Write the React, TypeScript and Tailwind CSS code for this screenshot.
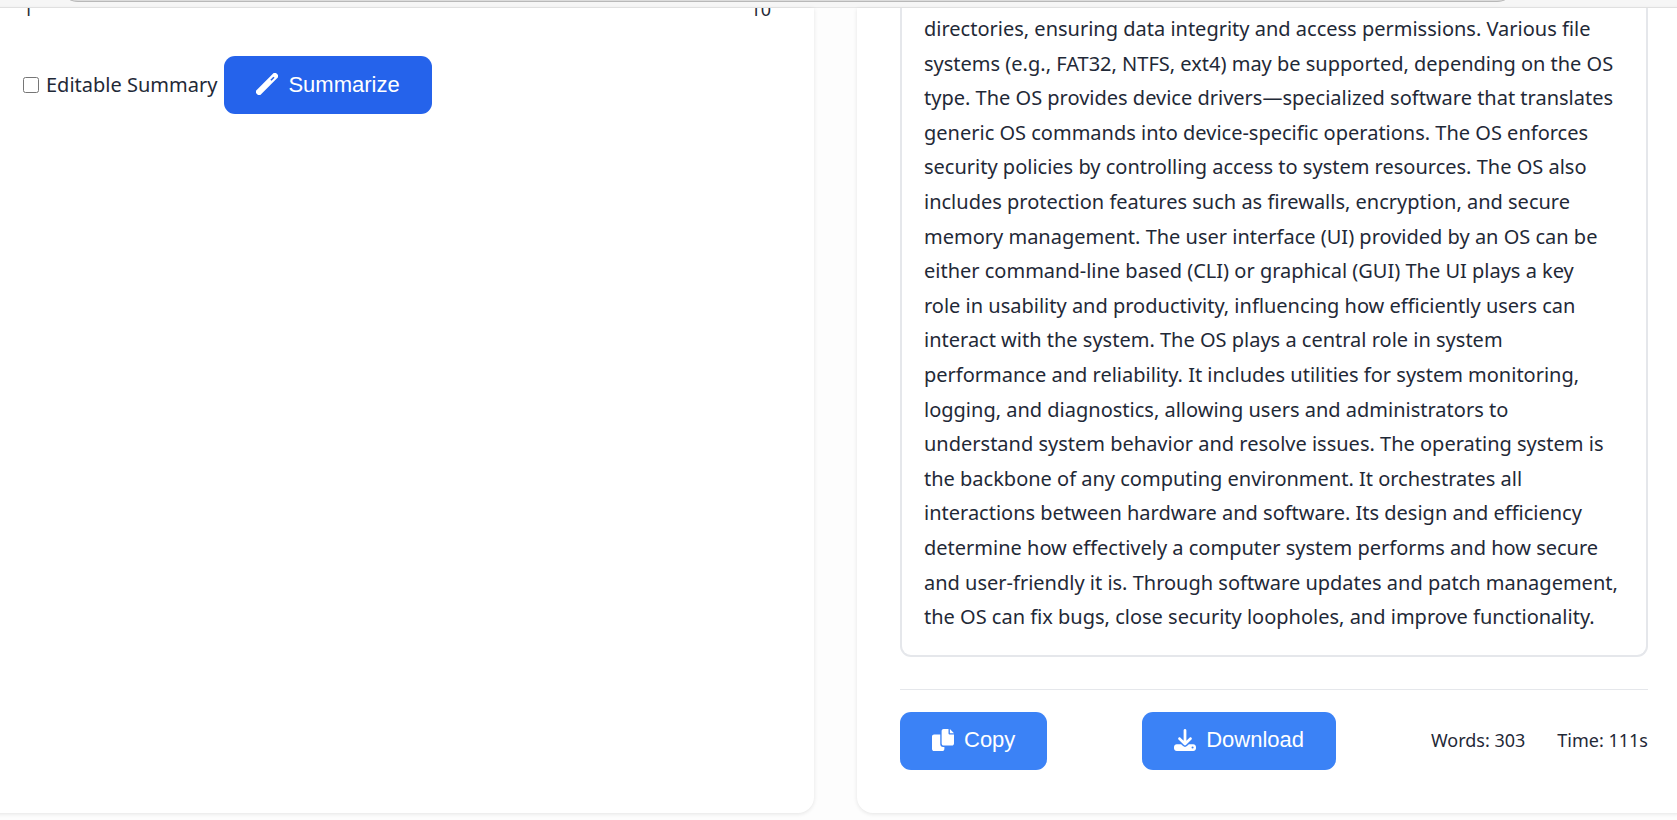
import type { ReactNode } from "react";
import { FaDownload } from "react-icons/fa6";

const summaryLines = [
  "directories, ensuring data integrity and access permissions. Various file",
  "systems (e.g., FAT32, NTFS, ext4) may be supported, depending on the OS",
  "type. The OS provides device drivers—specialized software that translates",
  "generic OS commands into device-specific operations. The OS enforces",
  "security policies by controlling access to system resources. The OS also",
  "includes protection features such as firewalls, encryption, and secure",
  "memory management. The user interface (UI) provided by an OS can be",
  "either command-line based (CLI) or graphical (GUI) The UI plays a key",
  "role in usability and productivity, influencing how efficiently users can",
  "interact with the system. The OS plays a central role in system",
  "performance and reliability. It includes utilities for system monitoring,",
  "logging, and diagnostics, allowing users and administrators to",
  "understand system behavior and resolve issues. The operating system is",
  "the backbone of any computing environment. It orchestrates all",
  "interactions between hardware and software. Its design and efficiency",
  "determine how effectively a computer system performs and how secure",
  "and user-friendly it is. Through software updates and patch management,",
  "the OS can fix bugs, close security loopholes, and improve functionality.",
];

function CopyIcon() {
  return (
    <svg viewBox="0 0 512 512" fill="currentColor" className="size-[22px]" aria-hidden="true">
      <path d="M384 96L384 0h-112c-26.51 0-48 21.49-48 48v288c0 26.51 21.49 48 48 48H464c26.51 0 48-21.49 48-48V128h-95.1C398.4 128 384 113.6 384 96zM416 0v96h96L416 0zM192 352V128h-144c-26.51 0-48 21.49-48 48v288c0 26.51 21.49 48 48 48h192c26.51 0 48-21.49 48-48L288 416h-32C220.7 416 192 387.3 192 352z" />
    </svg>
  );
}

function WandIcon() {
  return (
    <svg viewBox="0 0 22 22" fill="none" className="size-[22px]" aria-hidden="true">
      <rect
        x="-3.2"
        y="7.9"
        width="28.4"
        height="6.2"
        rx="2.4"
        fill="currentColor"
        transform="rotate(-45 11 11)"
      />
      <path d="M14.9 7.3l3.1-3.1" stroke="#2563eb" strokeWidth="1.6" />
    </svg>
  );
}

function Button({ icon, label, tone }: { icon: ReactNode; label: string; tone: string }) {
  return (
    <button
      type="button"
      className={`flex h-[58px] items-center gap-[10px] rounded-[11px] px-8 pb-[2px] font-['Liberation_Sans',Arial,sans-serif] text-[22px] text-white ${tone}`}
    >
      {icon}
      {label}
    </button>
  );
}

export default function App() {
  return (
    <div className="flex min-h-screen flex-col overflow-hidden bg-[#fdfdfd] font-['Noto_Sans','Segoe_UI',sans-serif] text-[#1f2937]">
      <header className="flex h-2 flex-col justify-end overflow-hidden border-b border-[#e6e6e6] bg-[#f6f6f6] pr-[160px] pb-[5px] pl-[58px]">
        <div className="h-10 shrink-0 rounded-full border border-[#b8b8b8] bg-[#dcdcdc]" />
      </header>

      <main className="-mr-[14px] -ml-5 grid grid-cols-2 gap-[43px]">
        <section className="rounded-b-2xl bg-white px-[43px] shadow-[0_1px_4px_rgba(0,0,0,0.1)]">
          <div className="h-12 overflow-hidden">
            <div className="-mt-[11px] flex justify-between text-[18px] leading-6">
              <span>1</span>
              <span>10</span>
            </div>
          </div>
          <div className="flex items-center gap-[7px]">
            <label className="flex items-center gap-[7px] text-[20px]">
              <input type="checkbox" className="size-4" />
              Editable Summary
            </label>
            <Button icon={<WandIcon />} label="Summarize" tone="bg-[#2563eb]" />
          </div>
        </section>

        <section className="rounded-b-2xl bg-white px-[43px] pb-[43px] shadow-[0_1px_4px_rgba(0,0,0,0.1)]">
          <div className="rounded-b-[11px] border-x-2 border-b-2 border-[#e5e7eb] px-[22px] pt-1 pb-5">
            <p className="text-[20px] leading-[1.73]">
              {summaryLines.map((line) => (
                <span key={line} className="block whitespace-nowrap">
                  {line}
                </span>
              ))}
            </p>
          </div>
          <footer className="mt-8 flex items-center justify-between border-t border-[#e5e7eb] pt-[22px]">
            <Button icon={<CopyIcon />} label="Copy" tone="bg-[#3b82f6]" />
            <Button icon={<FaDownload className="size-[22px]" />} label="Download" tone="bg-[#3b82f6]" />
            <div className="flex gap-8 text-[18px]">
              <span>Words: 303</span>
              <span>Time: 111s</span>
            </div>
          </footer>
        </section>
      </main>
    </div>
  );
}
